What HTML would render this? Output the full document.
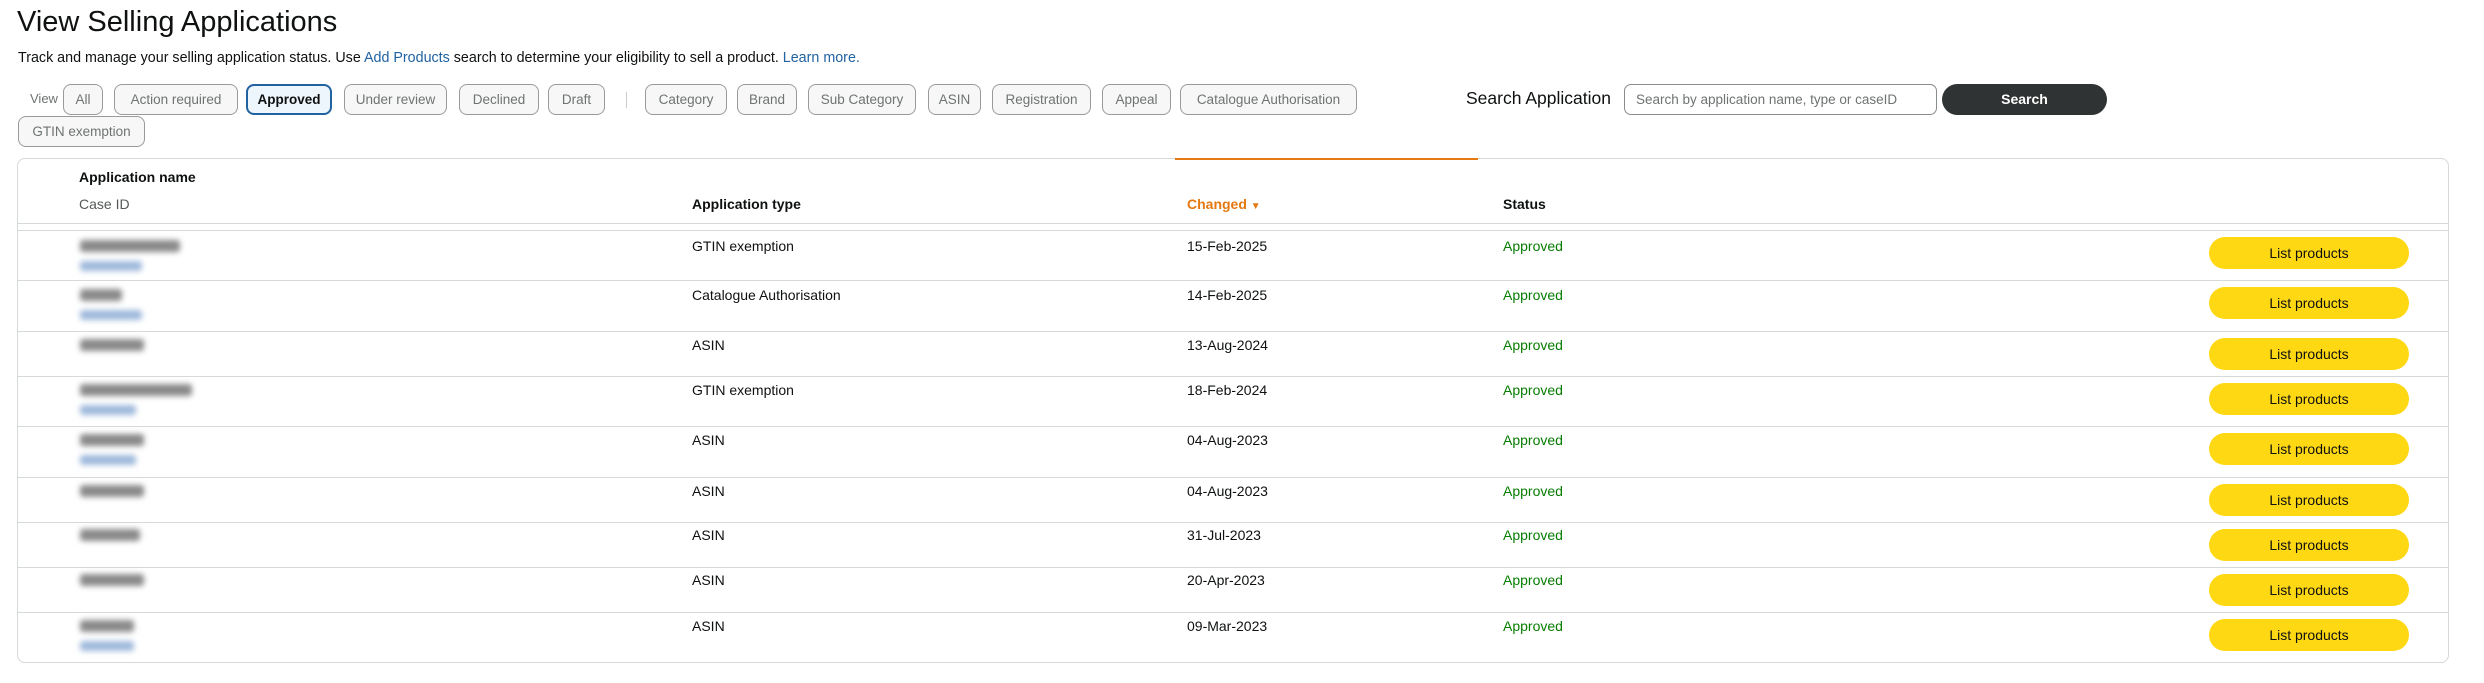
<!DOCTYPE html>
<html><head><meta charset="utf-8"><style>
*{box-sizing:border-box;margin:0;padding:0}
body{width:2484px;height:683px;background:#fff;font-family:"Liberation Sans",Arial,sans-serif;color:#0f1111;position:relative;overflow:hidden}
.a{position:absolute;white-space:nowrap}
.pill{position:absolute;top:84px;height:31px;border:1px solid #9a9a9a;border-radius:8px;background:#f7f7f7;color:#6f7373;font-size:13.5px;line-height:29px;text-align:center}
.hl{position:absolute;left:17px;width:2432px;height:1px;background:#d5d9d9}
.t{position:absolute;font-size:14px;white-space:nowrap}
.btn{position:absolute;left:2209px;width:200px;height:32px;border-radius:16px;background:#ffd814;font-size:14px;line-height:32px;text-align:center;color:#0f1111}
.bn{position:absolute;left:80px;height:12px;background:#8a8a8a;filter:blur(3px);border-radius:3px}
.bi{position:absolute;left:80px;height:10px;background:#9fb9dc;filter:blur(3px);border-radius:3px}
</style></head><body>
<div class="a" style="left:17px;top:2px;font-size:29px;line-height:40px">View Selling Applications</div>
<div class="a" style="left:18px;top:48px;font-size:14.3px;line-height:20px">Track and manage your selling application status. Use <span style="color:#2162a1">Add Products</span> search to determine your eligibility to sell a product. <span style="color:#2162a1">Learn more.</span></div>
<div class="a" style="left:30px;top:91px;font-size:13px;color:#6f7373">View</div>
<div class="pill" style="left:63px;width:40px">All</div>
<div class="pill" style="left:114px;width:124px">Action required</div>
<div class="pill" style="left:246px;width:86px;border:2px solid #2162a1;background:#edf5fd;color:#0f1111;font-weight:bold;line-height:27px">Approved</div>
<div class="pill" style="left:344px;width:103px">Under review</div>
<div class="pill" style="left:459px;width:80px">Declined</div>
<div class="pill" style="left:548px;width:57px">Draft</div>
<div class="a" style="left:626px;top:92px;width:1px;height:16px;background:#ccc"></div>
<div class="pill" style="left:645px;width:82px">Category</div>
<div class="pill" style="left:737px;width:60px">Brand</div>
<div class="pill" style="left:808px;width:108px">Sub Category</div>
<div class="pill" style="left:928px;width:53px">ASIN</div>
<div class="pill" style="left:992px;width:99px">Registration</div>
<div class="pill" style="left:1102px;width:69px">Appeal</div>
<div class="pill" style="left:1180px;width:177px">Catalogue Authorisation</div>
<div class="pill" style="left:18px;top:116px;width:127px">GTIN exemption</div>
<div class="a" style="left:1466px;top:88px;font-size:17.5px">Search Application</div>
<div class="a" style="left:1624px;top:84px;width:313px;height:31px;border:1px solid #888c8c;border-radius:7px;font-size:13.5px;color:#6f7373;line-height:29px;padding-left:11px">Search by application name, type or caseID</div>
<div class="a" style="left:1942px;top:84px;width:165px;height:31px;border-radius:16px;background:#303333;color:#fff;font-weight:bold;font-size:14px;line-height:31px;text-align:center">Search</div>

<div class="a" style="left:17px;top:158px;width:2432px;height:505px;border:1px solid #d5d9d9;border-radius:8px"></div>
<div class="a" style="left:1175px;top:158px;width:303px;height:2px;background:#e47911"></div>
<div class="t" style="left:79px;top:169px;font-weight:bold">Application name</div>
<div class="t" style="left:79px;top:196px;color:#565959">Case ID</div>
<div class="t" style="left:692px;top:196px;font-weight:bold">Application type</div>
<div class="t" style="left:1187px;top:196px;font-weight:bold;color:#e47911">Changed <span style="font-size:10px">&#9660;</span></div>
<div class="t" style="left:1503px;top:196px;font-weight:bold">Status</div>
<div class="hl" style="top:223px"></div>
<div class="hl" style="top:230px"></div>
<div class="hl" style="top:280px"></div>
<div class="hl" style="top:331px"></div>
<div class="hl" style="top:376px"></div>
<div class="hl" style="top:426px"></div>
<div class="hl" style="top:477px"></div>
<div class="hl" style="top:522px"></div>
<div class="hl" style="top:567px"></div>
<div class="hl" style="top:612px"></div>

<div class="bn" style="top:240px;width:100px"></div><div class="bi" style="top:261px;width:62px"></div>
<div class="bn" style="top:289px;width:42px"></div><div class="bi" style="top:310px;width:62px"></div>
<div class="bn" style="top:339px;width:64px"></div>
<div class="bn" style="top:384px;width:112px"></div><div class="bi" style="top:405px;width:56px"></div>
<div class="bn" style="top:434px;width:64px"></div><div class="bi" style="top:455px;width:56px"></div>
<div class="bn" style="top:485px;width:64px"></div>
<div class="bn" style="top:529px;width:60px"></div>
<div class="bn" style="top:574px;width:64px"></div>
<div class="bn" style="top:620px;width:54px"></div><div class="bi" style="top:641px;width:54px"></div>

<div class="t" style="left:692px;top:238px">GTIN exemption</div><div class="t" style="left:1187px;top:238px">15-Feb-2025</div><div class="t" style="left:1503px;top:238px;color:#067d00">Approved</div><div class="btn" style="top:237px">List products</div>
<div class="t" style="left:692px;top:287px">Catalogue Authorisation</div><div class="t" style="left:1187px;top:287px">14-Feb-2025</div><div class="t" style="left:1503px;top:287px;color:#067d00">Approved</div><div class="btn" style="top:287px">List products</div>
<div class="t" style="left:692px;top:337px">ASIN</div><div class="t" style="left:1187px;top:337px">13-Aug-2024</div><div class="t" style="left:1503px;top:337px;color:#067d00">Approved</div><div class="btn" style="top:338px">List products</div>
<div class="t" style="left:692px;top:382px">GTIN exemption</div><div class="t" style="left:1187px;top:382px">18-Feb-2024</div><div class="t" style="left:1503px;top:382px;color:#067d00">Approved</div><div class="btn" style="top:383px">List products</div>
<div class="t" style="left:692px;top:432px">ASIN</div><div class="t" style="left:1187px;top:432px">04-Aug-2023</div><div class="t" style="left:1503px;top:432px;color:#067d00">Approved</div><div class="btn" style="top:433px">List products</div>
<div class="t" style="left:692px;top:483px">ASIN</div><div class="t" style="left:1187px;top:483px">04-Aug-2023</div><div class="t" style="left:1503px;top:483px;color:#067d00">Approved</div><div class="btn" style="top:484px">List products</div>
<div class="t" style="left:692px;top:527px">ASIN</div><div class="t" style="left:1187px;top:527px">31-Jul-2023</div><div class="t" style="left:1503px;top:527px;color:#067d00">Approved</div><div class="btn" style="top:529px">List products</div>
<div class="t" style="left:692px;top:572px">ASIN</div><div class="t" style="left:1187px;top:572px">20-Apr-2023</div><div class="t" style="left:1503px;top:572px;color:#067d00">Approved</div><div class="btn" style="top:574px">List products</div>
<div class="t" style="left:692px;top:618px">ASIN</div><div class="t" style="left:1187px;top:618px">09-Mar-2023</div><div class="t" style="left:1503px;top:618px;color:#067d00">Approved</div><div class="btn" style="top:619px">List products</div>
</body></html>
